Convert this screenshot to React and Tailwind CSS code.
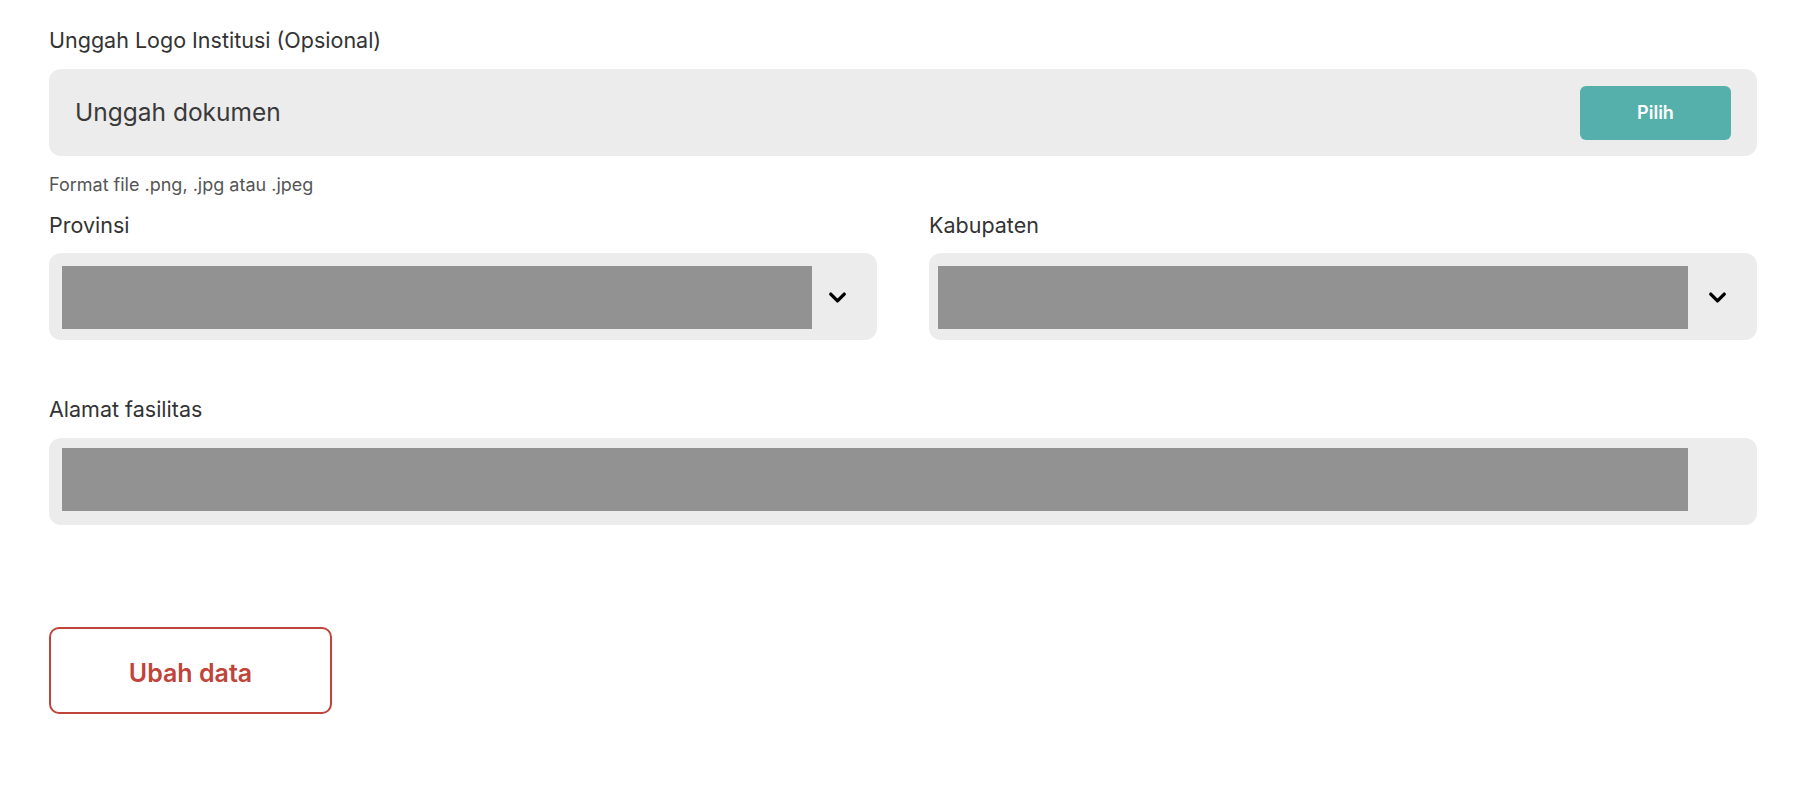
import { ChevronDown } from "lucide-react";

function Label({ children }) {
  return <p className="text-[21.5px] leading-[28px] text-[#333333]">{children}</p>;
}

function SelectField({ label, innerPad, iconBox }) {
  return (
    <div className="flex flex-col">
      <Label>{label}</Label>
      <div className={`mt-[14px] flex h-[87px] items-start rounded-[12px] bg-[#ececec] pt-[13px] ${innerPad}`}>
        <div className="h-[63px] flex-1 bg-[#929292]" />
        <div className={`flex h-[63px] items-center justify-center ${iconBox}`}>
          <ChevronDown className="h-[27px] w-[27px] text-black" strokeWidth={3} />
        </div>
      </div>
    </div>
  );
}

export default function App() {
  return (
    <main
      className="min-h-screen bg-white pl-[49px] pr-[51px] pt-[26px]"
      style={{ fontFamily: "Inter, 'Noto Sans', sans-serif" }}
    >
      <Label>Unggah Logo Institusi (Opsional)</Label>
      <div className="mt-[15px] flex h-[87px] items-center justify-between rounded-[12px] bg-[#ececec] pl-[26px] pr-[26px]">
        <span className="text-[24.5px] text-[#3a3a3a]">Unggah dokumen</span>
        <button className="flex h-[54px] w-[151px] items-center justify-center rounded-[6px] bg-[#55b0ab] text-[18px] font-semibold text-white">
          Pilih
        </button>
      </div>
      <p className="mt-[17px] text-[18px] leading-[24px] text-[#555555]">Format file .png, .jpg atau .jpeg</p>

      <div className="mt-[14px] grid grid-cols-2 gap-[52px]">
        <SelectField label="Provinsi" innerPad="pl-[13px] pr-[15px]" iconBox="w-[50px]" />
        <SelectField label="Kabupaten" innerPad="pl-[9px] pr-[11px]" iconBox="w-[58px]" />
      </div>

      <div className="mt-[55px]">
        <Label>Alamat fasilitas</Label>
        <div className="mt-[15px] flex h-[87px] items-start rounded-[12px] bg-[#ececec] pl-[13px] pr-[69px] pt-[10px]">
          <div className="h-[63px] flex-1 bg-[#929292]" />
        </div>
      </div>

      <button className="mt-[102px] flex h-[87px] w-[283px] items-center justify-center rounded-[10px] border-[2.5px] border-[#c0443a] pt-[6px] text-[25px] font-semibold text-[#c0443a]">
        Ubah data
      </button>
    </main>
  );
}
